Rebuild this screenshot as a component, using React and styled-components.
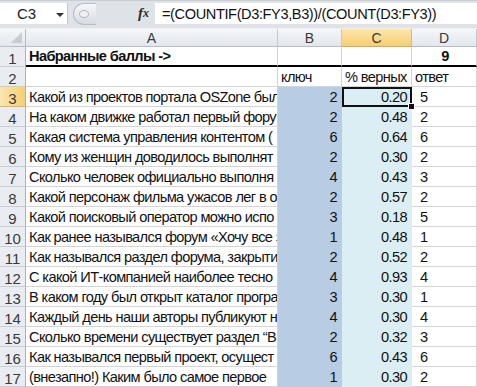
import React from 'react';
import styled, { createGlobalStyle, css } from 'styled-components';

const GlobalStyle = createGlobalStyle`
  html, body {
    margin: 0;
    padding: 0;
    background: #ffffff;
  }
  body {
    font-family: "Liberation Sans", Arial, sans-serif;
    overflow: hidden;
  }
`;

const FONT = `"Liberation Sans", Arial, sans-serif`;

// --- formula bar ---
const FormulaBar = styled.div`
  display: flex;
  align-items: stretch;
  height: 29px;
  box-sizing: border-box;
  padding: 2px 0 4px 0;
  background: #dfe3e8;
  border-top: 1px solid #c9ced6;
  border-bottom: 1px solid #eef0f3;
`;

const NameBox = styled.div`
  width: 68px;
  display: flex;
  align-items: center;
  background: #ffffff;
  border-right: 1px solid #c2c8d0;
  font: 15px ${FONT};
  color: #1b1b1b;
  box-sizing: border-box;
  padding-left: 17px;
  gap: 20px;
`;

const Arrow = styled.span`
  width: 0;
  height: 0;
  border-left: 4px solid transparent;
  border-right: 4px solid transparent;
  border-top: 4px solid #333;
  margin-top: 2px;
`;

const Grip = styled.div`
  width: 26px;
  margin-left: 3px;
  display: flex;
  align-items: center;
  justify-content: center;
`;

const GripDot = styled.div`
  width: 22px;
  height: 20px;
  border-radius: 11px 0 0 11px;
  background: linear-gradient(#f7f8fa, #d6dbe2);
  border: 1px solid #b7bec8;
  border-right: none;
  position: relative;
  &::after {
    content: '';
    position: absolute;
    left: 5px;
    top: 6px;
    width: 8px;
    height: 6px;
    border-radius: 50%;
    border: 1px solid #aeb5bf;
    background: #eef0f3;
  }
`;

const Fx = styled.div`
  width: 58px;
  display: flex;
  align-items: center;
  justify-content: flex-end;
  padding-right: 6px;
  box-sizing: border-box;
  font: italic bold 15px "Liberation Serif", "Times New Roman", serif;
  color: #2c2c2c;
  span {
    font-size: 12px;
    font-weight: bold;
  }
`;

const FormulaInput = styled.div`
  flex: 1;
  background: #ffffff;
  display: flex;
  align-items: center;
  padding-left: 7px;
  font: 14.6px ${FONT};
  letter-spacing: -0.4px;
  color: #111;
  white-space: nowrap;
  overflow: hidden;
`;

// --- sheet grid ---
const Sheet = styled.div`
  display: grid;
  grid-template-columns: 26px 252px 64px 70px 65px;
  grid-template-rows: 18px repeat(17, 20px);
`;

const headerBase = css`
  box-sizing: border-box;
  display: flex;
  align-items: center;
  justify-content: center;
  font: 14px ${FONT};
  color: #3a3a3a;
  background: ${(p) =>
    p.$active
      ? 'linear-gradient(#fbe6ae, #f6cf73)'
      : 'linear-gradient(#f4f6f8, #e3e7ec)'};
`;

const Corner = styled.div`
  ${headerBase};
  position: relative;
  border-right: 1px solid #b6bdc7;
  border-bottom: 1px solid #b6bdc7;
  &::after {
    content: '';
    position: absolute;
    right: 3px;
    bottom: 3px;
    border-left: 11px solid transparent;
    border-bottom: 11px solid #c6ccd4;
  }
`;

const ColHead = styled.div`
  ${headerBase};
  padding-top: 1px;
  border-right: 1px solid ${(p) => (p.$active ? '#e6b75a' : '#c3c9d1')};
  border-bottom: 1px solid ${(p) => (p.$active ? '#e3a93f' : '#b6bdc7')};
`;

const RowHead = styled.div`
  ${headerBase};
  background: ${(p) =>
    p.$active ? 'linear-gradient(90deg, #fbe6ae, #f6cf73)' : '#e9ecf0'};
  font-size: 15px;
  padding-top: 3px;
  border-right: 1px solid ${(p) => (p.$active ? '#e3a93f' : '#a9b1bc')};
  border-bottom: 1px solid ${(p) => (p.$active ? '#e6b75a' : '#c9ced5')};
`;

const fills = {
  none: '#ffffff',
  blue: '#b8cce4',
  aqua: '#daeef3',
};

const Cell = styled.div`
  position: relative;
  box-sizing: border-box;
  display: flex;
  align-items: flex-end;
  justify-content: ${(p) =>
    p.$align === 'right' ? 'flex-end' : p.$align === 'center' ? 'center' : 'flex-start'};
  padding: 0 ${(p) => (p.$align === 'right' ? '4px' : '1px')} 1px
    ${(p) => (p.$indent ? `${p.$indent}px` : '3px')};
  background: ${(p) => fills[p.$fill || 'none']};
  border-right: 1px solid ${(p) => (p.$fill && p.$fill !== 'none' ? fills[p.$fill] : '#d4d4d4')};
  border-bottom: ${(p) =>
    p.$thick
      ? '2px solid #000'
      : `1px solid ${p.$fill && p.$fill !== 'none' ? fills[p.$fill] : '#d4d4d4'}`};
  font: ${(p) => (p.$bold ? 'bold ' : '')}14.6px ${FONT};
  letter-spacing: -0.62px;
  color: #111;
  white-space: nowrap;
  overflow: hidden;
  ${(p) =>
    p.$selected &&
    css`
      overflow: visible;
      outline: 2px solid #111;
      outline-offset: -2px;
      z-index: 2;
      &::after {
        content: '';
        position: absolute;
        right: -4px;
        bottom: -4px;
        width: 5px;
        height: 5px;
        background: #111;
        border: 1px solid #fff;
      }
    `}
`;

// question texts as far as they show before column B cuts them
const rows = [
  ['Какой из проектов портала OSZone был', '2', '0.20', '5'],
  ['На каком движке работал первый фору', '2', '0.48', '2'],
  ['Какая система управления контентом (', '6', '0.64', '6'],
  ['Кому из женщин доводилось выполнят', '2', '0.30', '2'],
  ['Сколько человек официально выполня', '4', '0.43', '3'],
  ['Какой персонаж фильма ужасов лег в о', '2', '0.57', '2'],
  ['Какой поисковый оператор можно испо', '3', '0.18', '5'],
  ['Как ранее назывался форум «Хочу все з', '1', '0.48', '1'],
  ['Как назывался раздел форума, закрыти', '2', '0.52', '2'],
  ['С какой ИТ-компанией наиболее тесно', '4', '0.93', '4'],
  ['В каком году был открыт каталог програ', '3', '0.30', '1'],
  ['Каждый день наши авторы публикуют н', '4', '0.30', '4'],
  ['Сколько времени существует раздел “В', '2', '0.32', '3'],
  ['Как назывался первый проект, осущест', '6', '0.43', '6'],
  ['(внезапно!) Каким было самое первое', '1', '0.30', '2'],
];

const App = () => {
  return (
    <>
      <GlobalStyle />
      <FormulaBar>
        <NameBox>
          C3
          <Arrow />
        </NameBox>
        <Grip>
          <GripDot />
        </Grip>
        <Fx>
          f<span>x</span>
        </Fx>
        <FormulaInput>=(COUNTIF(D3:FY3,B3))/(COUNT(D3:FY3))</FormulaInput>
      </FormulaBar>

      <Sheet>
        <Corner />
        <ColHead>A</ColHead>
        <ColHead>B</ColHead>
        <ColHead $active>C</ColHead>
        <ColHead>D</ColHead>

        <RowHead>1</RowHead>
        <Cell $bold $thick>Набранные баллы -&gt;</Cell>
        <Cell $thick />
        <Cell $thick />
        <Cell $bold $thick $align="center">9</Cell>

        <RowHead>2</RowHead>
        <Cell />
        <Cell>ключ</Cell>
        <Cell>% верных</Cell>
        <Cell>ответ</Cell>

        {rows.map(([q, key, pct, ans], i) => (
          <React.Fragment key={i}>
            <RowHead $active={i === 0}>{i + 3}</RowHead>
            <Cell>{q}</Cell>
            <Cell $fill="blue" $align="right">{key}</Cell>
            <Cell $fill="aqua" $align="right" $selected={i === 0}>{pct}</Cell>
            <Cell $indent={8}>{ans}</Cell>
          </React.Fragment>
        ))}
      </Sheet>
    </>
  );
};

export default App;
